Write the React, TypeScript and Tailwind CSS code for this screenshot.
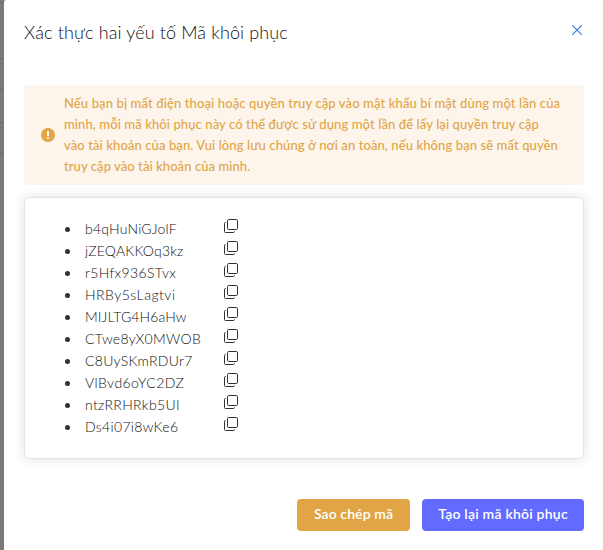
import React from 'react';

const warning = [
  { text: 'Nếu bạn bị mất điện thoại hoặc quyền truy cập vào mật khẩu bí mật dùng một lần của', fit: 'tracking-[0.12px]' },
  { text: 'mình, mỗi mã khôi phục này có thể được sử dụng một lần để lấy lại quyền truy cập', fit: 'tracking-[0.1px]' },
  { text: 'vào tài khoản của bạn. Vui lòng lưu chúng ở nơi an toàn, nếu không bạn sẽ mất quyền', fit: 'tracking-[0.1px]' },
  { text: 'truy cập vào tài khoản của mình.', fit: 'tracking-[0.07px]' },
];

const codes = [
  { text: 'b4qHuNiGJolF', fit: 'tracking-[0.2px]' },
  { text: 'jZEQAKKOq3kz', fit: 'tracking-[0.2px]' },
  { text: 'r5Hfx936STvx', fit: 'tracking-[0.35px]' },
  { text: 'HRBy5sLagtvi', fit: 'tracking-[0.5px]' },
  { text: 'MIJLTG4H6aHw', fit: 'tracking-[0.1px]' },
  { text: 'CTwe8yX0MWOB', fit: 'tracking-[0.3px]' },
  { text: 'C8UySKmRDUr7', fit: 'tracking-[0.28px]' },
  { text: 'VlBvd6oYC2DZ', fit: 'tracking-[0.45px]' },
  { text: 'ntzRRHRkb5UI', fit: 'tracking-[0.35px]' },
  { text: 'Ds4i07i8wKe6', fit: 'tracking-[0.32px]' },
];

function CopyIcon() {
  return (
    <svg width="15" height="15" viewBox="0 0 15 15" fill="none" stroke="#303133" strokeWidth="1">
      <rect x="3.5" y="0.5" width="10" height="10" rx="1.2" />
      <path d="M2 3.5H1.5a1 1 0 0 0-1 1V12.5a1 1 0 0 0 1 1H9.5a1 1 0 0 0 1-1V12.5" />
    </svg>
  );
}

export default function App() {
  return (
    <div className="flex h-[550px] w-[603px] overflow-hidden bg-[#7c7a78] font-['Lato','Noto_Sans',sans-serif]">
      <div className="flex w-1 shrink-0 flex-col">
        <div className="h-[3px] border-b border-[#6c6b6a]" />
        <div className="h-14 border-b border-[#6c6b6a]" />
        <div className="h-[31px] border-b border-[#6c6b6a]" />
        <div className="h-[33px] border-b border-[#6c6b6a]" />
        <div className="h-[31px] border-b border-[#6c6b6a]" />
      </div>
      <main className="flex flex-1 flex-col rounded-t-xs bg-white px-5">
        <header className="flex h-[85px] items-start justify-between pt-[21px]">
          <h1 className="whitespace-nowrap text-[18px] leading-[22px] font-light tracking-[0.13px] text-[#101112]">Xác thực hai yếu tố Mã khôi phục</h1>
          <button className="mt-1 mr-0.5 h-[10px] w-[10px]" aria-label="Đóng">
            <svg width="10" height="10" viewBox="0 0 10 10" fill="none" stroke="#3478e6" strokeWidth="1.2">
              <path d="M0.3 0.3 9.7 9.7M9.7 0.3 0.3 9.7" />
            </svg>
          </button>
        </header>
        <section className="flex h-[100px] w-[560px] items-center rounded-sm bg-[#fdf5ec] pl-[17px] text-[#e1a546]">
          <svg width="14" height="14" viewBox="0 0 14 14" className="mr-[9px] shrink-0">
            <circle cx="7" cy="7" r="7" fill="#e1a546" />
            <path d="M6.1 3h1.8v5H6.1zM6.1 9h1.8v1.8H6.1z" fill="#fff" />
          </svg>
          <div className="text-[13px] leading-[21px] font-medium whitespace-nowrap">
            {warning.map((l) => <p key={l.text}><span className={l.fit}>{l.text}</span></p>)}
          </div>
        </section>
        <section className="mt-3 h-[262px] w-[560px] rounded-sm border border-[#e4e4ef] bg-white pt-5 pl-10 shadow-[0_0_12px_rgba(0,0,0,0.12)]">
          <ul>
            {codes.map((c) => (
              <li key={c.text} className="flex h-[22px] items-start">
                <span className="mt-[9px] mr-[15px] h-[5px] w-[5px] shrink-0 rounded-full bg-[#303133]" />
                <span className="w-[139px] text-[14px] leading-[22px] font-light whitespace-nowrap text-[#101112]"><span className={c.fit}>{c.text}</span></span>
                <button aria-label="Sao chép" className="pt-px"><CopyIcon /></button>
              </li>
            ))}
          </ul>
        </section>
        <footer className="mt-10 flex w-[560px] justify-end gap-3 text-[14px] font-semibold text-white">
          <button className="h-8 w-[113px] rounded-sm bg-[#e1a546] pb-[3px] tracking-[0.1px] whitespace-nowrap">Sao chép mã</button>
          <button className="h-8 w-[162px] rounded-sm bg-[#626aff] pb-[3px] tracking-[0.22px] whitespace-nowrap">Tạo lại mã khôi phục</button>
        </footer>
      </main>
    </div>
  );
}
